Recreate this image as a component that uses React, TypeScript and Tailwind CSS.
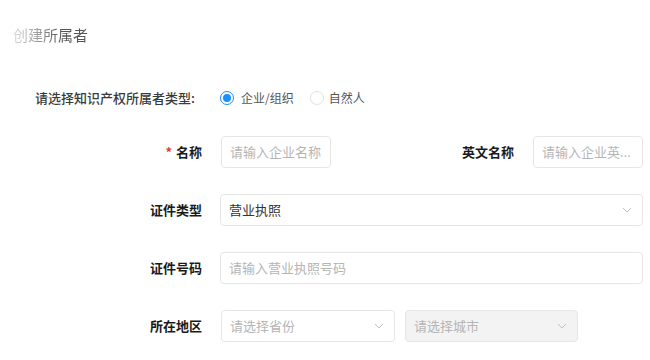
import React from "react";

const font = { fontFamily: '"Noto Sans CJK SC", "Noto Sans", sans-serif' };

function Chevron() {
  return (
    <svg width="10" height="6" viewBox="0 0 10 6" fill="none" className="shrink-0">
      <path d="M1 1l4 4 4-4" stroke="#c0c0c0" strokeWidth="1" />
    </svg>
  );
}

export default function App() {
  return (
    <div className="w-[650px] h-[360px] overflow-hidden bg-white text-[13px]" style={font}>
      <div className="pl-[13px] pt-[24px] h-[82px]">
        <span className="text-[15px] leading-[22px] bg-[linear-gradient(to_right,#dcdcdc,#9a9a9a_35%,#555_65%)] bg-clip-text text-transparent">
          创建所属者
        </span>
      </div>
      <div className="flex items-center pl-[35px] h-[32px]">
        <span className="font-medium text-[#3a3a3a] w-[185px]">请选择知识产权所属者类型:</span>
        <span className="w-[14px] h-[14px] rounded-full border border-[#1890ff] flex items-center justify-center">
          <span className="w-[8px] h-[8px] rounded-full bg-[#1890ff]" />
        </span>
        <span className="ml-[7px] text-[12px] text-[#555]">企业/组织</span>
        <span className="ml-[16px] w-[14px] h-[14px] rounded-full border border-[#e2e2e2]" />
        <span className="ml-[5px] text-[12px] text-[#555]">自然人</span>
      </div>
      <div className="flex flex-col gap-[26px] mt-[22px]">
        <div className="flex items-center h-[32px]">
          <div className="w-[202px] text-right font-bold text-[#1a1a1a]">
            <span className="text-[#e53935] mr-[4px]">*</span>名称
          </div>
          <div className="ml-[19px] w-[110px] h-[32px] border border-[#e6e6e6] rounded-[4px] px-[8px] flex items-center text-[#b5b5b5]">
            请输入企业名称
          </div>
          <div className="w-[183px] text-right font-bold text-[#1a1a1a]">英文名称</div>
          <div className="ml-[19px] w-[110px] h-[32px] border border-[#e6e6e6] rounded-[4px] px-[8px] flex items-center text-[#b5b5b5] whitespace-nowrap overflow-hidden">
            请输入企业英...
          </div>
        </div>
        <div className="flex items-center h-[32px]">
          <div className="w-[202px] text-right font-bold text-[#1a1a1a]">证件类型</div>
          <div className="ml-[18px] w-[423px] h-[32px] border border-[#e6e6e6] rounded-[4px] pl-[8px] pr-[10px] flex items-center justify-between text-[#333]">
            <span>营业执照</span>
            <Chevron />
          </div>
        </div>
        <div className="flex items-center h-[32px]">
          <div className="w-[202px] text-right font-bold text-[#1a1a1a]">证件号码</div>
          <div className="ml-[18px] w-[423px] h-[32px] border border-[#e6e6e6] rounded-[4px] px-[8px] flex items-center text-[#b5b5b5]">
            请输入营业执照号码
          </div>
        </div>
        <div className="flex items-center h-[32px]">
          <div className="w-[202px] text-right font-bold text-[#1a1a1a]">所在地区</div>
          <div className="ml-[19px] w-[174px] h-[32px] border border-[#e6e6e6] rounded-[4px] pl-[8px] pr-[10px] flex items-center justify-between text-[#b5b5b5]">
            <span>请选择省份</span>
            <Chevron />
          </div>
          <div className="ml-[10px] w-[173px] h-[32px] border border-[#e6e6e6] bg-[#f3f3f3] rounded-[4px] pl-[8px] pr-[10px] flex items-center justify-between text-[#b5b5b5]">
            <span>请选择城市</span>
            <Chevron />
          </div>
        </div>
      </div>
    </div>
  );
}
